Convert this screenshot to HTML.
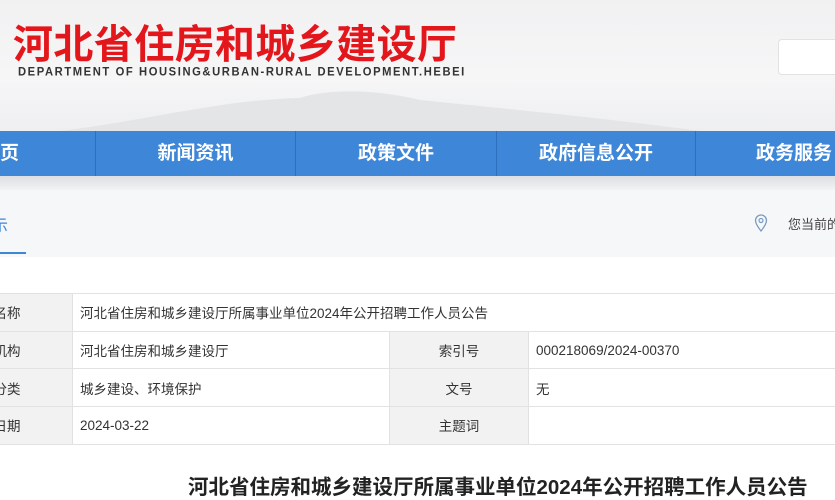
<!DOCTYPE html>
<html><head><meta charset="utf-8"><style>
*{margin:0;padding:0;box-sizing:border-box}
body{width:835px;height:500px;overflow:hidden;background:#fff;font-family:"Liberation Sans","Noto Sans CJK SC",sans-serif;position:relative}
.hdr{position:absolute;left:0;top:0;width:835px;height:131px;background:linear-gradient(#f1f1f2,#f6f6f7 60%,#eeeff1)}
.mtn{position:absolute;left:0;top:90px;width:835px;height:41px}
.t1{position:absolute;left:13px;top:12px;font-size:40px;font-weight:bold;color:#e3161c;letter-spacing:0.4px;white-space:nowrap}
.t2{position:absolute;left:18px;top:66px;font-size:11.2px;color:#333;letter-spacing:1.6px;white-space:nowrap;font-weight:bold;transform:scaleY(1.1)}
.srch{position:absolute;left:778px;top:39px;width:57px;height:36px;background:#fff;border:1px solid #e2e2e2;border-right:none;border-radius:4px 0 0 4px}
.nav{position:absolute;left:0;top:131px;width:835px;height:45px;background:#3d86d8;overflow:hidden}
.nav div{position:absolute;top:0;height:45px;line-height:45px;color:#fff;font-weight:bold;font-size:19px;text-align:center;white-space:nowrap}
.sep{position:absolute;top:131px;width:1px;height:45px;background:#2f6fbf}
.sh{position:absolute;left:0;top:176px;width:835px;height:14px;background:linear-gradient(#dcdee2,#f2f3f5)}
.bc{position:absolute;left:0;top:190px;width:835px;height:67px;background:#f6f7f9;overflow:hidden}
.tw{position:absolute;left:0;top:293px;width:835px;height:160px;overflow:hidden}
table{position:absolute;left:-86px;top:0;border-collapse:collapse;font-size:13.5px;color:#333;table-layout:fixed;width:954px}
td{border:1px solid #e2e2e2;height:37.7px;padding:0 7px;white-space:nowrap;overflow:hidden}
td.l{background:#f2f2f2;text-align:center}
h1{position:absolute;left:188px;top:470px;font-size:20.5px;font-weight:bold;color:#222;white-space:nowrap}
</style></head><body>
<div class="hdr">
<svg class="mtn" viewBox="0 0 835 41" preserveAspectRatio="none"><path d="M60 41 C150 30 220 10 300 8 C330 -2 380 0 420 10 C520 20 620 30 700 41Z" fill="#e4e5e7"/></svg>
<div class="t1">河北省住房和城乡建设厅</div>
<div class="t2">DEPARTMENT OF HOUSING&amp;URBAN-RURAL DEVELOPMENT.HEBEI</div>
<div class="srch"></div>
</div>
<div class="nav">
<div style="left:-30px;width:60px">首页</div>
<div style="left:96px;width:199px">新闻资讯</div>
<div style="left:296px;width:200px">政策文件</div>
<div style="left:497px;width:198px">政府信息公开</div>
<div style="left:746px;width:89px;text-align:left;padding-left:10px">政务服务</div>
</div>
<div class="sep" style="left:95px"></div><div class="sep" style="left:295px"></div><div class="sep" style="left:496px"></div><div class="sep" style="left:695px"></div>
<div class="sh"></div>
<div class="bc">
<div style="position:absolute;left:-8px;top:22px;font-size:16px;color:#3d86d8">示</div>
<div style="position:absolute;left:0;top:62px;width:26px;height:2px;background:#3d86d8"></div>
<svg style="position:absolute;left:754px;top:24px" width="14" height="18" viewBox="0 0 14 18"><path d="M7 17 C3 12 1.5 9 1.5 6.5 A5.5 5.5 0 0 1 12.5 6.5 C12.5 9 11 12 7 17Z" fill="none" stroke="#7a9cc0" stroke-width="1.3"/><circle cx="7" cy="6.5" r="2" fill="none" stroke="#7a9cc0" stroke-width="1.2"/></svg>
<div style="position:absolute;left:788px;top:24px;font-size:13px;color:#444;white-space:nowrap">您当前的位置</div>
</div>
<div class="tw">
<table>
<colgroup><col style="width:158px"><col style="width:317px"><col style="width:139px"><col style="width:340px"></colgroup>
<tr><td class="l">信息名称</td><td colspan="3">河北省住房和城乡建设厅所属事业单位2024年公开招聘工作人员公告</td></tr>
<tr><td class="l">发布机构</td><td>河北省住房和城乡建设厅</td><td class="l">索引号</td><td>000218069/2024-00370</td></tr>
<tr><td class="l">主题分类</td><td>城乡建设、环境保护</td><td class="l">文号</td><td>无</td></tr>
<tr><td class="l">发布日期</td><td>2024-03-22</td><td class="l">主题词</td><td></td></tr>
</table>
</div>
<h1>河北省住房和城乡建设厅所属事业单位2024年公开招聘工作人员公告</h1>
</body></html>
